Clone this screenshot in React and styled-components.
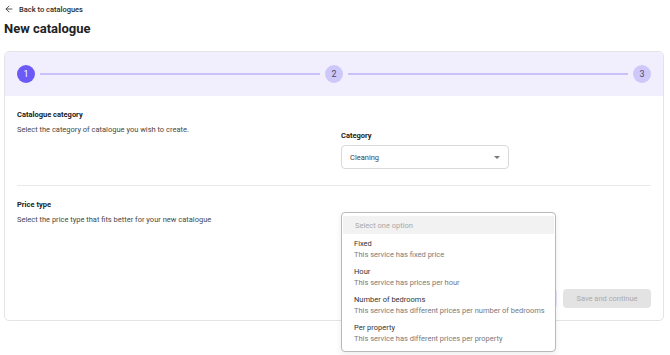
import React from "react";
import styled, { createGlobalStyle } from "styled-components";
import { ArrowLeft } from "lucide-react";

const Global = createGlobalStyle`
  html, body, #root { margin: 0; padding: 0; background: #fff; min-height: 355px; }
  body { font-family: Roboto, "Open Sans", sans-serif; color: #2b2b2b; }
  * { box-sizing: border-box; }
`;

const Page = styled.div`
  padding: 3px 6px 0 4px;
  width: 670px;
  min-height: 355px;
`;

const BackLink = styled.a`
  display: flex;
  align-items: center;
  gap: 5px;
  height: 12px;
  font-size: 7.5px;
  font-weight: 500;
  color: #2b2b2b;
  text-decoration: none;
`;

const Title = styled.h1`
  margin: 5px 0 0;
  font-size: 13px;
  line-height: 18px;
  font-weight: 700;
  color: #222;
`;

const Card = styled.div`
  margin-top: 13px;
  border: 1px solid #e4e4e4;
  border-radius: 5px;
`;

const Stepper = styled.div`
  display: flex;
  align-items: center;
  height: 44px;
  padding: 0 12px;
  background: #f1effe;
  border-radius: 5px 5px 0 0;
`;

const Step = styled.div`
  width: 18px;
  height: 18px;
  flex: none;
  border-radius: 50%;
  display: flex;
  align-items: center;
  justify-content: center;
  font-size: 9px;
  background: ${(p) => (p.$active ? "#6b5af6" : "#cec8fa")};
  color: ${(p) => (p.$active ? "#fff" : "#4a4a66")};
`;

const Line = styled.div`
  flex: 1;
  height: 1.5px;
  margin: 0 5px;
  background: #c9c1f8;
`;

const Body = styled.div`
  padding: 0 12px 12px;
`;

const Section = styled.div`
  display: grid;
  grid-template-columns: 310px 1fr;
  column-gap: 14px;
  padding: ${(p) => p.$pad};
  border-bottom: ${(p) => (p.$divider ? "1px solid #e9e9e9" : "none")};
`;

const SectionTitle = styled.div`
  font-size: 7.5px;
  font-weight: 700;
  line-height: 10px;
  color: #222;
`;

const SectionText = styled.div`
  margin-top: 5px;
  font-size: 7.5px;
  line-height: 10px;
  color: #484848;
`;

const Field = styled.div`
  position: relative;
  padding-top: ${(p) => p.$top || "0"};
`;

const Label = styled.div`
  font-size: 7.5px;
  font-weight: 700;
  line-height: 10px;
  color: #222;
`;

const Select = styled.div`
  margin-top: 4px;
  width: 168px;
  height: 24px;
  border: 1px solid #d9d9d9;
  border-radius: 4px;
  display: flex;
  align-items: center;
  justify-content: space-between;
  padding: 0 8px;
  font-size: 7.5px;
  color: #444;
`;

const Caret = styled.span`
  width: 0;
  height: 0;
  border-left: 3px solid transparent;
  border-right: 3px solid transparent;
  border-top: 3px solid #777;
`;

const Footer = styled.div`
  display: flex;
  justify-content: flex-end;
  gap: 6px;
  margin-top: 64px;
`;

const Button = styled.button`
  height: 19px;
  padding: 0;
  border: none;
  border-radius: 4px;
  font-family: inherit;
  font-size: 7.5px;
  white-space: nowrap;
  width: ${(p) => p.$w};
  background: ${(p) => (p.$variant === "soft" ? "#e7e4fd" : "#e3e3e3")};
  color: ${(p) => (p.$variant === "soft" ? "#6b5af6" : "#ababab")};
`;

const Menu = styled.div`
  position: absolute;
  left: 0;
  top: 12px;
  width: 215px;
  background: #fff;
  border: 1px solid #b9b9b9;
  border-radius: 4px;
  padding: 3px 0 5px;
  box-shadow: 0 2px 6px rgba(0, 0, 0, 0.08);
  z-index: 5;
`;

const MenuHeader = styled.div`
  height: 18px;
  margin: 0 1px;
  padding: 0 12px;
  display: flex;
  align-items: center;
  background: #f2f2f2;
  font-size: 7.5px;
  color: #a8a8a8;
`;

const Option = styled.div`
  padding: 4px 12px 2px;
  white-space: nowrap;
`;

const OptTitle = styled.div`
  font-size: 7.5px;
  line-height: 11px;
  color: #333;
`;

const OptDesc = styled.div`
  font-size: 7.5px;
  line-height: 11px;
  color: #7a7a7a;
`;

const options = [
  ["Fixed", "This service has fixed price"],
  ["Hour", "This service has prices per hour"],
  ["Number of bedrooms", "This service has different prices per number of bedrooms"],
  ["Per property", "This service has different prices per property"],
];

export default function App() {
  return (
    <>
      <Global />
      <Page>
        <BackLink href="#">
          <ArrowLeft size={10} strokeWidth={2} color="#333" />
          Back to catalogues
        </BackLink>
        <Title>New catalogue</Title>
        <Card>
          <Stepper>
            <Step $active>1</Step>
            <Line />
            <Step>2</Step>
            <Line />
            <Step>3</Step>
          </Stepper>
          <Body>
            <Section $divider $pad="14px 0 16px">
              <div>
                <SectionTitle>Catalogue category</SectionTitle>
                <SectionText>Select the category of catalogue you wish to create.</SectionText>
              </div>
              <Field $top="21px">
                <Label>Category</Label>
                <Select>
                  Cleaning
                  <Caret />
                </Select>
              </Field>
            </Section>
            <Section $pad="14px 0 0">
              <div>
                <SectionTitle>Price type</SectionTitle>
                <SectionText>Select the price type that fits better for your new catalogue</SectionText>
              </div>
              <Field $top="0">
                <Menu>
                  <MenuHeader>Select one option</MenuHeader>
                  {options.map(([t, d]) => (
                    <Option key={t}>
                      <OptTitle>{t}</OptTitle>
                      <OptDesc>{d}</OptDesc>
                    </Option>
                  ))}
                </Menu>
              </Field>
            </Section>
            <Footer>
              <Button $variant="soft" $w="60px">Back</Button>
              <Button $w="88px">Save and continue</Button>
            </Footer>
          </Body>
        </Card>
      </Page>
    </>
  );
}
